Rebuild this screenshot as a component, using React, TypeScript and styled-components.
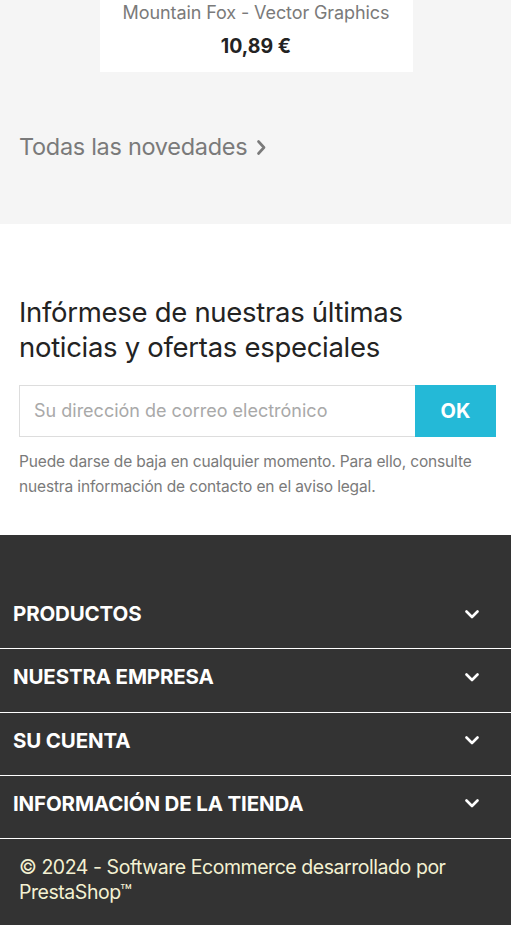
import React from "react";
import styled, { createGlobalStyle } from "styled-components";

const Global = createGlobalStyle`
  html, body { margin: 0; padding: 0; background: #333333; }
  body { font-family: Inter, "Noto Sans", "Liberation Sans", sans-serif; }
  * { box-sizing: border-box; }
`;

const Page = styled.div`
  width: 511px;
  display: flex;
  flex-direction: column;
`;

const Products = styled.section`
  background: #f5f5f5;
  height: 224px;
  display: flex;
  flex-direction: column;
`;

const CardRow = styled.div`
  display: flex;
  justify-content: center;
  padding-left: 1px;
`;

const Card = styled.div`
  width: 313px;
  height: 72px;
  background: #ffffff;
  display: flex;
  flex-direction: column;
  align-items: center;
`;

const ProductName = styled.div`
  font-size: 18px;
  line-height: 26px;
  color: #7a7a7a;
  letter-spacing: -0.1px;
`;

const Price = styled.div`
  margin-top: 7px;
  font-size: 19.5px;
  line-height: 26px;
  font-weight: 700;
  color: #232323;
`;

const AllLink = styled.a`
  margin-top: 60px;
  margin-left: 19px;
  display: flex;
  align-items: center;
  gap: 10px;
  font-size: 23.5px;
  line-height: 30px;
  color: #7a7a7a;
  text-decoration: none;
  letter-spacing: -0.3px;
`;

const Newsletter = styled.section`
  background: #ffffff;
  padding: 71px 15px 36px 19px;
  display: flex;
  flex-direction: column;
`;

const Heading = styled.h2`
  margin: 0;
  font-size: 27.5px;
  line-height: 35px;
  font-weight: 400;
  color: #232323;
  letter-spacing: -0.3px;
`;

const Form = styled.form`
  margin-top: 19.5px;
  display: flex;
  height: 52px;
`;

const Input = styled.input`
  flex: 1;
  height: 52px;
  border: 1px solid #dddddd;
  border-right: none;
  padding: 0 14px;
  font-family: inherit;
  font-size: 18px;
  color: #232323;
  outline: none;
  &::placeholder { color: #a9a9a9; letter-spacing: 0; }
`;

const OkButton = styled.button`
  width: 81px;
  height: 52px;
  border: none;
  background: #24b9d7;
  color: #ffffff;
  font-family: inherit;
  font-size: 20px;
  font-weight: 700;
`;

const Legal = styled.p`
  margin: 12.5px 0 0;
  font-size: 15.5px;
  line-height: 25px;
  color: #7a7a7a;
  letter-spacing: -0.15px;
`;

const Footer = styled.footer`
  background: #333333;
  padding-top: 51px;
  display: flex;
  flex-direction: column;
`;

const Row = styled.div`
  display: flex;
  align-items: center;
  justify-content: space-between;
  padding: 16px 32px 22.3px 13px;
  border-bottom: 1px solid #ffffff;
`;

const RowTitle = styled.span`
  font-size: 20.5px;
  line-height: 24px;
  font-weight: 700;
  color: #ffffff;
  letter-spacing: -0.15px;
`;

const Copyright = styled.p`
  margin: 0;
  padding: 16px 40px 20px 19px;
  font-size: 19.5px;
  line-height: 25px;
  color: #f3f1d2;
  letter-spacing: -0.45px;
`;

const Chevron = () => (
  <svg width="14" height="9" viewBox="0 0 14 9">
    <polyline points="1.5,1.5 7,7 12.5,1.5" fill="none" stroke="#ffffff" strokeWidth="2.6" strokeLinecap="round" strokeLinejoin="round" />
  </svg>
);

const ChevronRight = () => (
  <svg width="9" height="15" viewBox="0 0 9 15">
    <polyline points="1.5,1.5 7,7.5 1.5,13.5" fill="none" stroke="#7a7a7a" strokeWidth="2.6" strokeLinecap="round" strokeLinejoin="round" />
  </svg>
);

const sections = ["PRODUCTOS", "NUESTRA EMPRESA", "SU CUENTA", "INFORMACIÓN DE LA TIENDA"];

export default function App() {
  return (
    <Page>
      <Global />
      <Products>
        <CardRow>
          <Card>
            <ProductName>Mountain Fox - Vector Graphics</ProductName>
            <Price>10,89 €</Price>
          </Card>
        </CardRow>
        <AllLink href="#">
          Todas las novedades <ChevronRight />
        </AllLink>
      </Products>
      <Newsletter>
        <Heading>
          Infórmese de nuestras últimas
          <br />
          noticias y ofertas especiales
        </Heading>
        <Form onSubmit={(e) => e.preventDefault()}>
          <Input placeholder="Su dirección de correo electrónico" />
          <OkButton type="submit">OK</OkButton>
        </Form>
        <Legal>
          Puede darse de baja en cualquier momento. Para ello, consulte nuestra información de contacto en el aviso legal.
        </Legal>
      </Newsletter>
      <Footer>
        {sections.map((s) => (
          <Row key={s}>
            <RowTitle>{s}</RowTitle>
            <Chevron />
          </Row>
        ))}
        <Copyright>© 2024 - Software Ecommerce desarrollado por PrestaShop™</Copyright>
      </Footer>
    </Page>
  );
}
